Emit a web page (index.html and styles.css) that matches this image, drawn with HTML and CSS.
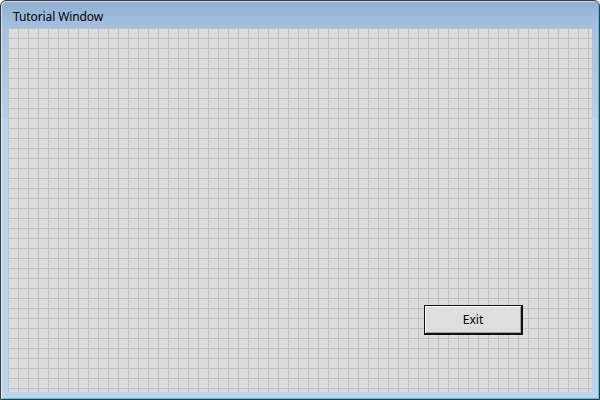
FILE: index.html
```html
<!DOCTYPE html>
<html>
<head>
<meta charset="utf-8">
<link rel="stylesheet" href="styles.css">
</head>
<body>
<div class="window">
  <div class="titlebar">Tutorial Window</div>
  <div class="client">
    <button class="btn">Exit</button>
  </div>
</div>
</body>
</html>
```
FILE: styles.css
```css
html, body {
  margin: 0;
  padding: 0;
  background: #ffffff;
}
.window {
  width: 600px;
  height: 400px;
  box-sizing: border-box;
  border: 1px solid #3b3b3b;
  border-radius: 6px 6px 0 0;
  background: linear-gradient(to bottom, #8eafd4 0px, #a7c2e0 28px, #b6cee8 116px, #bcd4ec 118px, #bcd4ec 100%);
  box-shadow: inset 1px 1px 0 rgba(255,255,255,0.55), inset -1px -1px 0 #45c4f0;
  display: flex;
  flex-direction: column;
  font-family: "Noto Sans", "DejaVu Sans", sans-serif;
}
.titlebar {
  height: 27px;
  box-sizing: border-box;
  padding: 8px 0 0 12px;
  font-size: 12px;
  line-height: 16px;
  color: #000;
  letter-spacing: -0.1px;
}
.client {
  flex: 1;
  margin: 0 7px 7px 7px;
  background-color: #dcdcdc;
  background-image:
    linear-gradient(to right, #bfbfbf 1px, transparent 1px),
    linear-gradient(to bottom, #bfbfbf 1px, transparent 1px);
  background-size: 10px 10px;
  display: flex;
  justify-content: flex-end;
  align-items: flex-end;
  padding: 0 69px 57px 0;
}
.btn {
  width: 99px;
  height: 30px;
  box-sizing: border-box;
  border: 2px solid #111;
  border-top-width: 1px;
  border-left-width: 1px;
  background: #dedede;
  box-shadow: inset 1px 1px 0 #ffffff, inset -1px -1px 0 #a0a0a0;
  font-family: "Noto Sans", "DejaVu Sans", sans-serif;
  font-size: 12px;
  color: #000;
  padding: 0;
  margin: 0;
}
```
